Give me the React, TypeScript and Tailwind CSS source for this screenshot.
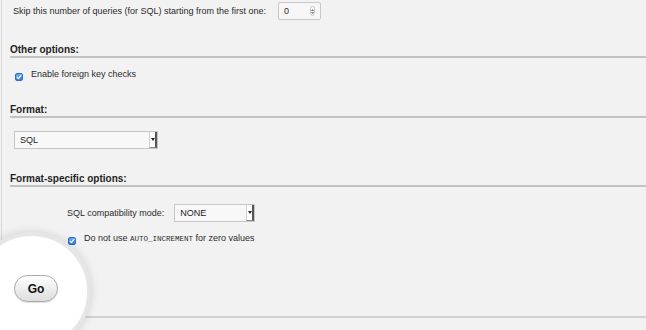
const Check = ({ className = '' }: { className?: string }) => (
  <span className={`flex w-[8px] h-[8px] shrink-0 items-center justify-center rounded-[2px] bg-gradient-to-b from-[#6aa8f0] to-[#2f7fe0] border border-[#2a6fc6] ${className}`}>
    <svg width="6" height="6" viewBox="0 0 6 6" className="block">
      <path d="M1 3.2 L2.4 4.6 L5 1.4" fill="none" stroke="#fff" strokeWidth="1.2" strokeLinecap="round" strokeLinejoin="round" />
    </svg>
  </span>
)

const Heading = ({ children, className = '' }: { children: string; className?: string }) => (
  <div className={`ml-[8px] h-[12px] text-[10px] leading-[12px] font-bold text-[#1f1f1f] border-b-2 border-[#c2c2c2] box-content ${className}`}>
    {children}
  </div>
)

const Select = ({ value, className = '' }: { value: string; className?: string }) => (
  <div className={`flex h-[18px] border border-[#c6c6c6] bg-[#f8f8f8] ${className}`}>
    <span className="flex-1 pl-[5px] text-[9px] leading-[16px] text-[#222]">{value}</span>
    <span className="flex w-[8px] items-center justify-center bg-white border-l border-[#d0d0d0] border-r-2 border-r-[#555] border-b border-b-[#888]">
      <svg width="4" height="3" viewBox="0 0 4 3" className="block">
        <path d="M0 0 H4 L2 3 Z" fill="#222" />
      </svg>
    </span>
  </div>
)

export default function App() {
  return (
    <div className="relative w-[646px] h-[330px] overflow-hidden bg-[#f2f2f2] pl-px font-['Liberation_Sans',Arial,sans-serif] text-[#2b2b2b]">
      <div className="h-full border-l border-[#d8d8d8]">
        {/* skip row */}
        <div className="flex h-[22px] items-start pt-[2px] pl-[11px]">
          <span className="text-[9px] leading-[18px]">Skip this number of queries (for SQL) starting from the first one:</span>
          <div className="ml-[12px] flex h-[18px] w-[43px] items-center justify-between rounded-[2px] border border-[#c8c8c8] bg-[#f7f7f7] pl-[5px] pr-[5px]">
            <span className="text-[9px] leading-none">0</span>
            <span className="flex h-[10px] w-[5px] flex-col items-center justify-center gap-[1px] rounded-full border border-[#c4c4c4] bg-white">
              <svg width="3" height="2" viewBox="0 0 3 2" className="block"><path d="M0 2 L1.5 0 L3 2 Z" fill="#777" /></svg>
              <svg width="3" height="2" viewBox="0 0 3 2" className="block"><path d="M0 0 H3 L1.5 2 Z" fill="#777" /></svg>
            </span>
          </div>
        </div>

        <Heading className="mt-[22px]">Other options:</Heading>

        <div className="mt-[10px] flex h-[12px] items-start pl-[13px]">
          <Check className="mt-[5px]" />
          <span className="ml-[8px] text-[9px] leading-[12px]">Enable foreign key checks</span>
        </div>

        <Heading className="mt-[24px]">Format:</Heading>

        <Select value="SQL" className="ml-[12px] mt-[13px] w-[144px]" />

        <Heading className="mt-[24px]">Format-specific options:</Heading>

        <div className="mt-[17px] flex items-center pl-[65px]">
          <span className="text-[9px] leading-[18px]">SQL compatibility mode:</span>
          <Select value="NONE" className="ml-[10px] w-[81px]" />
        </div>

        <div className="mt-[10px] flex h-[12px] items-start pl-[66px]">
          <Check className="mt-[5px]" />
          <span className="ml-[8px] text-[9px] leading-[12px]">
            Do not use <code className="font-['Liberation_Mono','Courier_New',monospace] text-[7.5px]">AUTO_INCREMENT</code> for zero values
          </span>
        </div>

        <div className="relative z-10 mt-[31px] pl-[12px]">
          <button className="h-[27px] w-[44px] rounded-full border border-[#a9a9a9] bg-gradient-to-b from-white to-[#dedede] text-[12px] font-bold text-[#111] shadow-[0_1px_1px_rgba(0,0,0,0.12)]">
            Go
          </button>
        </div>

        <div className="mt-[14px] border-t-2 border-[#d2d2d2]" />
      </div>

      {/* spotlight around the Go button */}
      <div className="absolute left-[-28px] top-[232px] h-[119px] w-[119px] rounded-full border-[4px] border-[#e6e6e6] bg-white shadow-[0_0_10px_rgba(0,0,0,0.14)]" />
    </div>
  )
}
